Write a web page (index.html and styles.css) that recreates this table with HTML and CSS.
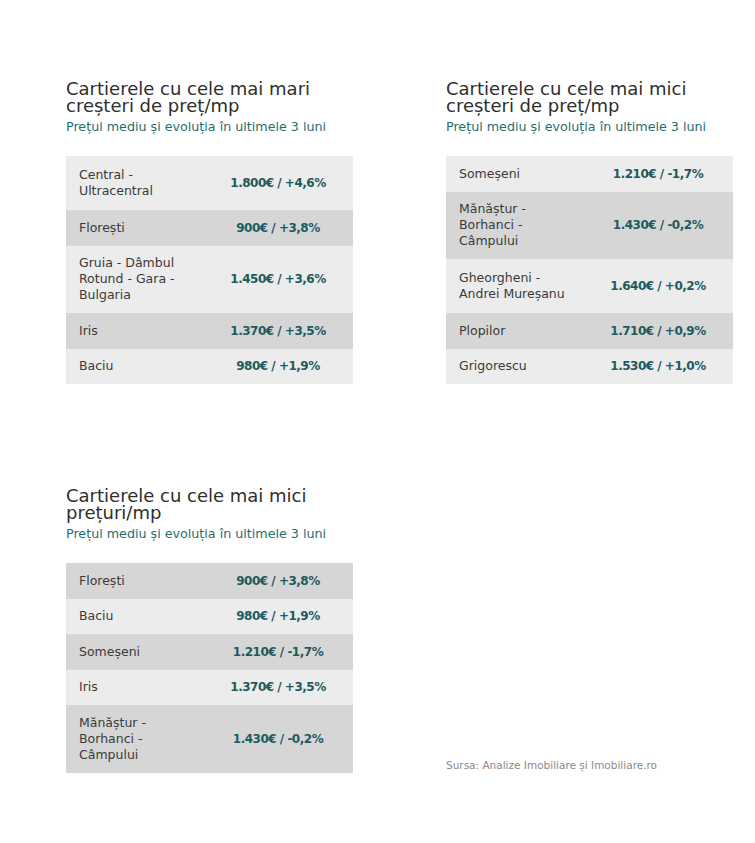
FILE: index.html
```html
<!DOCTYPE html>
<html lang="ro">
<head>
<meta charset="utf-8">
<link rel="stylesheet" href="styles.css">
</head>
<body>
<div class="page">
  <section class="block">
    <h2 class="title">Cartierele cu cele mai mari creșteri de preț/mp</h2>
    <p class="subtitle">Prețul mediu și evoluția în ultimele 3 luni</p>
    <div class="table">
      <div class="row light r2"><span class="name">Central - Ultracentral</span><span class="val">1.800€ / +4,6%</span></div>
      <div class="row dark"><span class="name">Florești</span><span class="val">900€ / +3,8%</span></div>
      <div class="row light"><span class="name">Gruia - Dâmbul Rotund - Gara - Bulgaria</span><span class="val">1.450€ / +3,6%</span></div>
      <div class="row dark"><span class="name">Iris</span><span class="val">1.370€ / +3,5%</span></div>
      <div class="row light"><span class="name">Baciu</span><span class="val">980€ / +1,9%</span></div>
    </div>
  </section>
  <section class="block">
    <h2 class="title">Cartierele cu cele mai mici creșteri de preț/mp</h2>
    <p class="subtitle">Prețul mediu și evoluția în ultimele 3 luni</p>
    <div class="table">
      <div class="row light"><span class="name">Someșeni</span><span class="val">1.210€ / -1,7%</span></div>
      <div class="row dark"><span class="name">Mănăștur - Borhanci - Câmpului</span><span class="val">1.430€ / -0,2%</span></div>
      <div class="row light r2"><span class="name">Gheorgheni - Andrei Mureșanu</span><span class="val">1.640€ / +0,2%</span></div>
      <div class="row dark"><span class="name">Plopilor</span><span class="val">1.710€ / +0,9%</span></div>
      <div class="row light"><span class="name">Grigorescu</span><span class="val">1.530€ / +1,0%</span></div>
    </div>
  </section>
  <section class="block lower">
    <h2 class="title">Cartierele cu cele mai mici prețuri/mp</h2>
    <p class="subtitle">Prețul mediu și evoluția în ultimele 3 luni</p>
    <div class="table">
      <div class="row dark"><span class="name">Florești</span><span class="val">900€ / +3,8%</span></div>
      <div class="row light"><span class="name">Baciu</span><span class="val">980€ / +1,9%</span></div>
      <div class="row dark"><span class="name">Someșeni</span><span class="val">1.210€ / -1,7%</span></div>
      <div class="row light"><span class="name">Iris</span><span class="val">1.370€ / +3,5%</span></div>
      <div class="row dark"><span class="name">Mănăștur - Borhanci - Câmpului</span><span class="val">1.430€ / -0,2%</span></div>
    </div>
  </section>
  <p class="source">Sursa: Analize Imobiliare și Imobiliare.ro</p>
</div>
</body>
</html>
```
FILE: styles.css
```css
html, body {
  margin: 0;
  padding: 0;
  background: #ffffff;
}
body {
  font-family: "DejaVu Sans", "Liberation Sans", sans-serif;
  color: #333;
}
.page {
  display: grid;
  grid-template-columns: 287px 287px;
  column-gap: 93px;
  row-gap: 103px;
  padding: 80px 0 0 66px;
}
.block {
  display: flex;
  flex-direction: column;
}
.title {
  margin: 0;
  max-width: 250px;
  font-weight: normal;
  font-size: 18px;
  line-height: 17px;
  color: #2e2e2e;
}
.subtitle {
  margin: 5px 0 0 0;
  font-size: 12.7px;
  line-height: 15px;
  color: #1f6e70;
}
.table {
  margin-top: 22px;
  display: flex;
  flex-direction: column;
}
.row {
  display: grid;
  grid-template-columns: 137px 150px;
  align-items: center;
  min-height: 35.5px;
  box-sizing: border-box;
  padding: 9.75px 0;
}
.row.r2 {
  padding: 11px 0;
}
.light { background: #ececec; }
.dark { background: #d6d6d6; }
.name {
  padding-left: 13px;
  padding-right: 4px;
  font-size: 12.5px;
  line-height: 16px;
  color: #3a3a3a;
}
.val {
  text-align: center;
  font-size: 12px;
  font-weight: bold;
  color: #1d5a60;
  letter-spacing: -0.5px;
}
.source {
  align-self: end;
  margin: 0 0 2px 0;
  font-size: 10.5px;
  color: #8a8a8a;
}
```
